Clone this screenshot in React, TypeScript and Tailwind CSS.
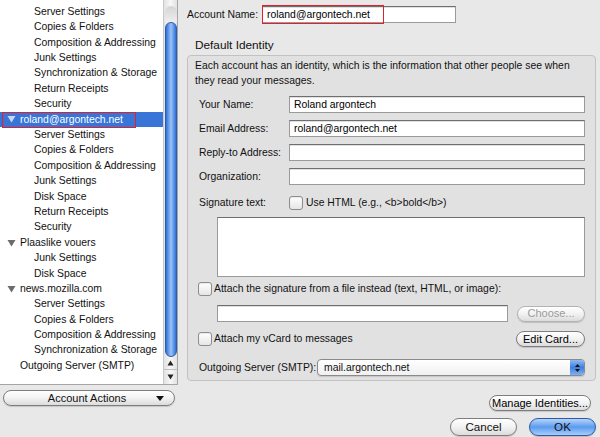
const font = { fontFamily: '"Liberation Sans", Arial, sans-serif' };

type Row = { label: string; level: 0 | 1; open?: boolean; selected?: boolean };

const rows: Row[] = [
  { label: "Server Settings", level: 1 },
  { label: "Copies & Folders", level: 1 },
  { label: "Composition & Addressing", level: 1 },
  { label: "Junk Settings", level: 1 },
  { label: "Synchronization & Storage", level: 1 },
  { label: "Return Receipts", level: 1 },
  { label: "Security", level: 1 },
  { label: "roland@argontech.net", level: 0, open: true, selected: true },
  { label: "Server Settings", level: 1 },
  { label: "Copies & Folders", level: 1 },
  { label: "Composition & Addressing", level: 1 },
  { label: "Junk Settings", level: 1 },
  { label: "Disk Space", level: 1 },
  { label: "Return Receipts", level: 1 },
  { label: "Security", level: 1 },
  { label: "Plaaslike vouers", level: 0, open: true },
  { label: "Junk Settings", level: 1 },
  { label: "Disk Space", level: 1 },
  { label: "news.mozilla.com", level: 0, open: true },
  { label: "Server Settings", level: 1 },
  { label: "Copies & Folders", level: 1 },
  { label: "Composition & Addressing", level: 1 },
  { label: "Synchronization & Storage", level: 1 },
  { label: "Outgoing Server (SMTP)", level: 0 },
];

const Triangle = ({ white }: { white?: boolean }) => (
  <svg width="9" height="8" viewBox="0 0 9 8" className="shrink-0">
    <path d="M0.5 1 L8.5 1 L4.5 7.5 Z" fill={white ? "#c8d6f0" : "#6b6b6b"} />
  </svg>
);

const Checkbox = () => (
  <span className="inline-block h-[14px] w-[14px] shrink-0 rounded-[3px] border border-[#8d8d8d] bg-gradient-to-b from-white to-[#e6e6e6] shadow-[inset_0_1px_1px_rgba(0,0,0,0.08)]" />
);

const Field = ({ value, className = "" }: { value?: string; className?: string }) => (
  <div
    className={`flex h-[17px] items-center whitespace-nowrap border border-[#9a9a9a] border-t-[#6f6f6f] bg-white pl-[4px] text-black shadow-[inset_0_1px_0_rgba(0,0,0,0.12)] ${className}`}
  >
    {value}
  </div>
);

const AquaButton = ({ label, className = "", disabled }: { label: string; className?: string; disabled?: boolean }) => (
  <button
    type="button"
    className={`flex h-[16px] items-center justify-center whitespace-nowrap rounded-full border bg-gradient-to-b from-white via-[#f2f2f2] to-[#dcdcdc] text-[11px] shadow-[0_1px_1px_rgba(0,0,0,0.15)] ${disabled ? "border-[#b3b3b3] text-[#9a9a9a]" : "border-[#7d7d7d] text-black"} ${className}`}
  >
    {label}
  </button>
);

export default function App() {
  return (
    <div style={font} className="flex h-[437px] w-[600px] overflow-hidden whitespace-nowrap bg-[#e8e8e8] text-[10.4px] text-[#111]">
      {/* left: account tree */}
      <div className="flex w-[178px] shrink-0 flex-col">
        <div className="flex h-[385px] border-b border-r border-[#a5a5a5] bg-white">
          <div className="flex-1 pt-[4px]">
            {rows.map((r, i) => (
              <div
                key={i}
                className={`relative flex h-[15.4px] items-center ${r.selected ? "bg-[#3875d7] text-white" : ""}`}
              >
                {r.level === 0 ? (
                  <div className="flex items-center">
                    <span className="flex w-[20px] justify-center pl-[2px]">{r.open && <Triangle white={r.selected} />}</span>
                    <span>{r.label}</span>
                  </div>
                ) : (
                  <span className="pl-[34px]">{r.label}</span>
                )}
                {r.selected && (
                  <span className="absolute left-[2px] top-[0px] h-[16px] w-[134px] border-[1.5px] border-[#e0202a]" />
                )}
              </div>
            ))}
          </div>
          {/* scrollbar */}
          <div className="flex w-[14px] flex-col border-l border-[#c9c9c9] bg-gradient-to-r from-[#e2e2e2] via-[#f7f7f7] to-[#e2e2e2]">
            <div className="mx-auto mt-[6px] h-[16px] w-[12px] rounded-t-full bg-gradient-to-b from-[#d4d4d4] to-[#eeeeee]" />
            <div className="mx-auto h-[335px] w-[12px] rounded-full border border-[#2a5db0] bg-gradient-to-r from-[#2d6fd8] via-[#9cc2f5] to-[#2d6fd8]" />
            <div className="flex h-[13px] items-center justify-center border-b border-[#c0c0c0]">
              <svg width="7" height="6" viewBox="0 0 7 6">
                <path d="M3.5 0.5 L6.5 5.5 L0.5 5.5 Z" fill="#222" />
              </svg>
            </div>
            <div className="flex h-[13px] items-center justify-center">
              <svg width="7" height="6" viewBox="0 0 7 6">
                <path d="M0.5 0.5 L6.5 0.5 L3.5 5.5 Z" fill="#222" />
              </svg>
            </div>
          </div>
        </div>
        <div className="ml-[3px] mr-[3px] mt-[5px] flex h-[16px] items-center rounded-full border border-[#7d7d7d] bg-gradient-to-b from-white via-[#f2f2f2] to-[#dcdcdc] text-[11px] shadow-[0_1px_1px_rgba(0,0,0,0.15)]">
          <span className="flex-1 pl-[14px] text-center">Account Actions</span>
          <svg width="8" height="5" viewBox="0 0 8 5" className="mr-[10px]">
            <path d="M0 0 L8 0 L4 5 Z" fill="#111" />
          </svg>
        </div>
      </div>

      {/* right: settings */}
      <div className="flex flex-1 flex-col pl-[9px] pr-[4px] pt-[6px]">
        <div className="flex h-[17px] items-center">
          <span className="w-[75px] shrink-0">Account Name:</span>
          <div className="relative">
            <Field value="roland@argontech.net" className="w-[194px]" />
            <span className="absolute left-[0px] top-[-1px] h-[19px] w-[122px] border-[1.5px] border-[#e0202a]" />
          </div>
        </div>

        <div className="mt-[15px] h-[14px] pl-[8px] text-[11.8px] leading-[14px]">Default Identity</div>

        <div className="mt-[3px] flex h-[326px] flex-col rounded-[4px] border border-[#c2c2c2] bg-[#e1e1e1] pl-[7px] pr-[10px] pt-[2px]">
          <p className="whitespace-normal leading-[15px]">
            Each account has an identity, which is the information that other people see when they read your messages.
          </p>

          <div className="mt-[8px] flex flex-col gap-[7px] pl-[4px]">
            {[
              ["Your Name:", "Roland argontech"],
              ["Email Address:", "roland@argontech.net"],
              ["Reply-to Address:", ""],
              ["Organization:", ""],
            ].map(([l, v]) => (
              <div key={l} className="flex items-center">
                <span className="w-[90px] shrink-0">{l}</span>
                <Field value={v} className="flex-1" />
              </div>
            ))}
          </div>

          <div className="mt-[11px] flex h-[14px] items-center pl-[4px]">
            <span className="w-[90px] shrink-0">Signature text:</span>
            <Checkbox />
            <span className="ml-[3px]">Use HTML (e.g., &lt;b&gt;bold&lt;/b&gt;)</span>
          </div>

          <div className="ml-[22px] mt-[7px] h-[60px] shrink-0 border border-[#9a9a9a] border-t-[#6f6f6f] bg-white" />

          <div className="mt-[5px] flex h-[14px] items-center pl-[3px]">
            <Checkbox />
            <span className="ml-[2px]">Attach the signature from a file instead (text, HTML, or image):</span>
          </div>

          <div className="ml-[22px] mt-[9px] flex items-center">
            <Field className="w-[291px]" />
            <AquaButton label="Choose..." disabled className="ml-auto w-[68px]" />
          </div>

          <div className="mt-[9px] flex h-[16px] items-center pl-[3px]">
            <Checkbox />
            <span className="ml-[2px]">Attach my vCard to messages</span>
            <AquaButton label="Edit Card..." className="ml-auto w-[69px]" />
          </div>

          <div className="mt-[12px] flex items-center pl-[4px]">
            <span className="w-[118px] shrink-0">Outgoing Server (SMTP):</span>
            <div className="flex h-[17px] flex-1 items-center rounded-[4px] border border-[#8a8a8a] bg-gradient-to-b from-white to-[#f0f0f0] shadow-[0_1px_1px_rgba(0,0,0,0.12)]">
              <span className="flex-1 pl-[6px]">mail.argontech.net</span>
              <div className="flex h-full w-[14px] flex-col items-center justify-center gap-[2px] rounded-r-[3px] bg-gradient-to-b from-[#8fb8f3] via-[#3d7fe0] to-[#7fb0f0]">
                <svg width="5" height="3" viewBox="0 0 5 3">
                  <path d="M2.5 0 L5 3 L0 3 Z" fill="#111" />
                </svg>
                <svg width="5" height="3" viewBox="0 0 5 3">
                  <path d="M0 0 L5 0 L2.5 3 Z" fill="#111" />
                </svg>
              </div>
            </div>
          </div>
        </div>

        <div className="mt-[14px] flex justify-end pr-[5px]">
          <AquaButton label="Manage Identities..." className="w-[102px]" />
        </div>

        <div className="mt-[7px] flex justify-end gap-[12px]">
          <button
            type="button"
            className="flex h-[18px] w-[67px] items-center justify-center rounded-full border border-[#7d7d7d] bg-gradient-to-b from-white via-[#f2f2f2] to-[#dcdcdc] text-[11.6px] shadow-[0_1px_1px_rgba(0,0,0,0.15)]"
          >
            Cancel
          </button>
          <button
            type="button"
            className="flex h-[18px] w-[67px] items-center justify-center rounded-full border border-[#2a5aa8] bg-gradient-to-b from-[#b7d4f8] via-[#5b9bef] to-[#a8cdf8] text-[11.6px] shadow-[0_1px_1px_rgba(0,0,0,0.2)]"
          >
            OK
          </button>
        </div>
      </div>
    </div>
  );
}
